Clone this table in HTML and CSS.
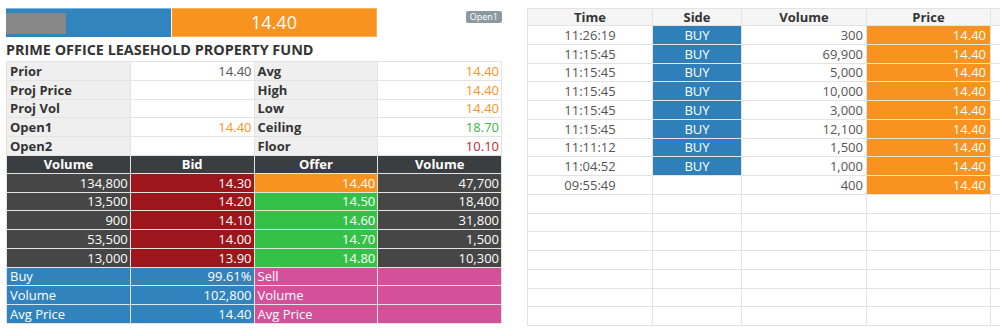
FILE: index.html
```html
<!DOCTYPE html>
<html lang="en">
<head>
<meta charset="utf-8">
<title>Quote</title>
<link rel="stylesheet" href="styles.css">
</head>
<body>
<div class="page">
  <section class="left">
    <div class="topbar">
      <div class="logo"><div class="logo-mask"></div></div>
      <div class="last">14.40</div>
      <span class="badge">Open1</span>
    </div>
    <h1 class="title">PRIME OFFICE LEASEHOLD PROPERTY FUND</h1>
    <table class="quote">
      <colgroup><col class="c"><col class="c"><col class="c"><col class="c"></colgroup>
      <tbody class="info">
        <tr><td class="lbl">Prior</td><td class="val">14.40</td><td class="lbl">Avg</td><td class="val orange">14.40</td></tr>
        <tr><td class="lbl">Proj Price</td><td class="val"></td><td class="lbl">High</td><td class="val orange">14.40</td></tr>
        <tr><td class="lbl">Proj Vol</td><td class="val"></td><td class="lbl">Low</td><td class="val orange">14.40</td></tr>
        <tr><td class="lbl">Open1</td><td class="val orange">14.40</td><td class="lbl">Ceiling</td><td class="val green">18.70</td></tr>
        <tr><td class="lbl">Open2</td><td class="val"></td><td class="lbl">Floor</td><td class="val red">10.10</td></tr>
      </tbody>
      <tbody class="book">
        <tr class="head"><th>Volume</th><th>Bid</th><th>Offer</th><th>Volume</th></tr>
        <tr><td class="vol">134,800</td><td class="bid">14.30</td><td class="offer best">14.40</td><td class="vol">47,700</td></tr>
        <tr><td class="vol">13,500</td><td class="bid">14.20</td><td class="offer">14.50</td><td class="vol">18,400</td></tr>
        <tr><td class="vol">900</td><td class="bid">14.10</td><td class="offer">14.60</td><td class="vol">31,800</td></tr>
        <tr><td class="vol">53,500</td><td class="bid">14.00</td><td class="offer">14.70</td><td class="vol">1,500</td></tr>
        <tr><td class="vol">13,000</td><td class="bid">13.90</td><td class="offer">14.80</td><td class="vol">10,300</td></tr>
      </tbody>
      <tbody class="sum">
        <tr><td class="buy">Buy</td><td class="buy num">99.61%</td><td class="sell">Sell</td><td class="sell"></td></tr>
        <tr><td class="buy">Volume</td><td class="buy num">102,800</td><td class="sell">Volume</td><td class="sell"></td></tr>
        <tr><td class="buy">Avg Price</td><td class="buy num">14.40</td><td class="sell">Avg Price</td><td class="sell"></td></tr>
      </tbody>
    </table>
  </section>
  <section class="right">
    <table class="trades">
      <colgroup><col class="t1"><col class="t2"><col class="t3"><col class="t4"><col class="t5"></colgroup>
      <thead><tr><th>Time</th><th>Side</th><th>Volume</th><th>Price</th><th></th></tr></thead>
      <tbody>
        <tr><td class="time">11:26:19</td><td class="side">BUY</td><td class="num">300</td><td class="price">14.40</td><td></td></tr>
        <tr><td class="time">11:15:45</td><td class="side">BUY</td><td class="num">69,900</td><td class="price">14.40</td><td></td></tr>
        <tr><td class="time">11:15:45</td><td class="side">BUY</td><td class="num">5,000</td><td class="price">14.40</td><td></td></tr>
        <tr><td class="time">11:15:45</td><td class="side">BUY</td><td class="num">10,000</td><td class="price">14.40</td><td></td></tr>
        <tr><td class="time">11:15:45</td><td class="side">BUY</td><td class="num">3,000</td><td class="price">14.40</td><td></td></tr>
        <tr><td class="time">11:15:45</td><td class="side">BUY</td><td class="num">12,100</td><td class="price">14.40</td><td></td></tr>
        <tr><td class="time">11:11:12</td><td class="side">BUY</td><td class="num">1,500</td><td class="price">14.40</td><td></td></tr>
        <tr><td class="time">11:04:52</td><td class="side">BUY</td><td class="num">1,000</td><td class="price">14.40</td><td></td></tr>
        <tr><td class="time">09:55:49</td><td></td><td class="num">400</td><td class="price">14.40</td><td></td></tr>
        <tr><td></td><td></td><td></td><td></td><td></td></tr>
        <tr><td></td><td></td><td></td><td></td><td></td></tr>
        <tr><td></td><td></td><td></td><td></td><td></td></tr>
        <tr><td></td><td></td><td></td><td></td><td></td></tr>
        <tr><td></td><td></td><td></td><td></td><td></td></tr>
        <tr><td></td><td></td><td></td><td></td><td></td></tr>
        <tr><td></td><td></td><td></td><td></td><td></td></tr>
      </tbody>
    </table>
  </section>
</div>
</body>
</html>
```
FILE: styles.css
```css
html, body {
  margin: 0;
  background: #fff;
  overflow: hidden;
}
body {
  font-family: "Open Sans", "DejaVu Sans", sans-serif;
  font-size: 13px;
  color: #444;
}
.page {
  display: flex;
  gap: 25px;
  padding: 8px 0 0 6px;
  width: 1000px;
  box-sizing: border-box;
}
.left {
  width: 496px;
  flex: none;
}
.topbar {
  display: flex;
  align-items: flex-start;
  height: 29px;
}
.logo {
  width: 165px;
  height: 29px;
  box-sizing: border-box;
  background: #3184bd;
  border-top: 1px solid #7ab8e2;
  padding-top: 4px;
}
.logo-mask {
  width: 60px;
  height: 21px;
  background: #888;
}
.last {
  width: 206px;
  height: 29px;
  box-sizing: border-box;
  background: #f7931e;
  border: 1px solid #fbb05a;
  border-left: 1px solid #fff4e6;
  color: #fff;
  font-size: 18px;
  line-height: 26px;
  text-align: center;
}
.badge {
  margin-left: auto;
  margin-top: 3px;
  height: 12px;
  padding: 0 4px;
  background: #8b9aa1;
  border-radius: 2px;
  color: #fff;
  font-size: 9px;
  line-height: 12px;
}
.title {
  margin: 0;
  height: 24px;
  font-size: 14.4px;
  line-height: 25px;
  font-weight: 700;
  color: #333;
  white-space: nowrap;
}
table {
  border-collapse: collapse;
  table-layout: fixed;
}
.quote {
  width: 496px;
}
.quote td, .quote th {
  border: 1px solid #e3e3e3;
  padding: 0 3px;
  height: 17.75px;
  line-height: 16px;
  white-space: nowrap;
  overflow: hidden;
}
.info .lbl {
  background: #efefef;
  color: #333;
  font-weight: 700;
}
.info .val {
  background: #fff;
  text-align: right;
  padding-right: 2px;
  color: #555;
}
.orange { color: #f7931e !important; }
.green { color: #3cb54a !important; }
.red { color: #c1272d !important; }
.book .head th {
  background: #3a3e41;
  color: #fff;
  font-weight: 700;
  height: 17px;
  line-height: 15px;
  text-align: center;
}
.book td {
  color: #fff;
  text-align: right;
  padding-right: 2px;
}
.book .vol { background: #464646; }
.book .bid { background: #9d161b; }
.book .offer { background: #35c147; }
.book .offer.best { background: #f7931e; }
.sum td { color: #fff; }
.sum .buy { background: #3183bd; }
.sum .sell { background: #d4519a; }
.sum .num { text-align: right; padding-right: 2px; }
.right {
  flex: 1;
  min-width: 0;
  overflow: hidden;
}
.trades {
  width: 530px;
}
.trades .t1 { width: 125px; }
.trades .t2 { width: 89px; }
.trades .t3 { width: 125px; }
.trades .t4 { width: 124px; }
.trades .t5 { width: 67px; }
.trades th, .trades td {
  border: 1px solid #e3e3e3;
  padding: 0 3px;
  white-space: nowrap;
  overflow: hidden;
}
.trades th {
  background: #f5f5f5;
  color: #333;
  font-weight: 700;
  height: 16px;
  line-height: 15px;
}
.trades td {
  height: 17.75px;
  line-height: 16px;
  color: #555;
}
.trades .time { text-align: center; }
.trades .side {
  background: #2f80ba;
  color: #fff;
  text-align: center;
}
.trades .num { text-align: right; padding-right: 3px; }
.trades .price {
  background: #f7931e;
  color: #fff;
  text-align: right;
  padding-right: 4px;
}
```
